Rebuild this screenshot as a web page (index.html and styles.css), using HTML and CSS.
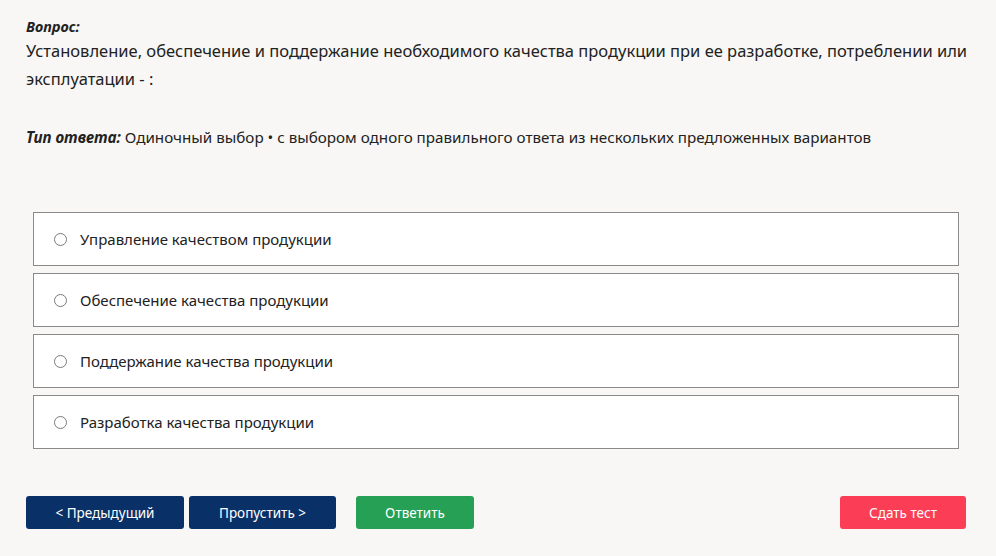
FILE: index.html
```html
<!DOCTYPE html>
<html lang="ru">
<head>
<meta charset="utf-8">
<link rel="stylesheet" href="styles.css">
</head>
<body>
<div class="page">
  <div class="label">Вопрос:</div>
  <div class="question">Установление, обеспечение и поддержание необходимого качества продукции при ее разработке, потреблении или эксплуатации - :</div>
  <div class="type"><span class="type-label">Тип ответа:</span> Одиночный выбор • с выбором одного правильного ответа из нескольких предложенных вариантов</div>
  <div class="options">
    <label class="option"><span class="radio"></span><span class="option-text">Управление качеством продукции</span></label>
    <label class="option"><span class="radio"></span><span class="option-text">Обеспечение качества продукции</span></label>
    <label class="option"><span class="radio"></span><span class="option-text">Поддержание качества продукции</span></label>
    <label class="option"><span class="radio"></span><span class="option-text">Разработка качества продукции</span></label>
  </div>
  <div class="actions">
    <button class="btn btn-navy btn-prev">&lt; Предыдущий</button>
    <button class="btn btn-navy btn-skip">Пропустить &gt;</button>
    <button class="btn btn-green btn-answer">Ответить</button>
    <span class="spacer"></span>
    <button class="btn btn-red btn-submit">Сдать тест</button>
  </div>
</div>
</body>
</html>
```
FILE: styles.css
```css
html, body {
  margin: 0;
  padding: 0;
  background: #f8f7f5;
}
body {
  font-family: "Noto Sans", "Open Sans", sans-serif;
  color: #222;
}
.page {
  padding: 15px 30px 0 26px;
}
.label {
  font-size: 14.5px;
  font-weight: 700;
  font-style: italic;
  line-height: 22px;
}
.question {
  font-size: 16.5px;
  line-height: 28px;
  margin-right: -24px;
}
.type {
  margin-top: 33px;
  font-size: 15.2px;
  line-height: 22px;
}
.type-label {
  font-weight: 700;
  font-style: italic;
}
.options {
  margin: 64px 7px 0 7px;
  display: flex;
  flex-direction: column;
  gap: 7px;
}
.option {
  display: flex;
  align-items: center;
  height: 54px;
  box-sizing: border-box;
  border: 1px solid #8a8a8a;
  background: #fff;
  padding-left: 20px;
  font-size: 15px;
}
.radio {
  width: 11px;
  height: 11px;
  border: 1px solid #7a7a7a;
  border-radius: 50%;
  background: #fff;
  margin-right: 13px;
  flex: none;
}
.actions {
  display: flex;
  margin-top: 47px;
  gap: 5px;
}
.spacer { flex: 1; }
.btn {
  height: 33px;
  border: none;
  border-radius: 3px;
  color: #fff;
  font-family: inherit;
  font-size: 13.5px;
  padding: 0;
  cursor: pointer;
}
.btn-navy { background: #0a3167; }
.btn-green { background: #25a055; }
.btn-red { background: #fb3d55; }
.btn-prev { width: 158px; }
.btn-skip { width: 147px; }
.btn-answer { width: 118px; margin-left: 15px; }
.btn-submit { width: 126px; }
```
